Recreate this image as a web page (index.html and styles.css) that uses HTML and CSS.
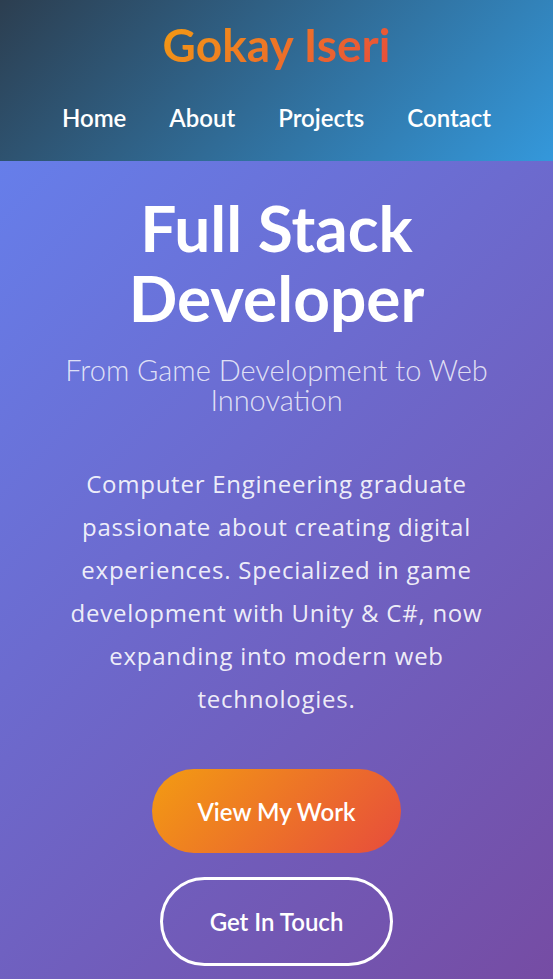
FILE: index.html
```html
<!DOCTYPE html>
<html lang="en">
<head>
<meta charset="utf-8">
<meta name="viewport" content="width=device-width, initial-scale=1">
<title>Gokay Iseri</title>
<link rel="stylesheet" href="styles.css">
</head>
<body>
<header class="site-header">
  <div class="logo">Gokay Iseri</div>
  <nav class="nav">
    <a href="#home" class="nav-link">Home</a>
    <a href="#about" class="nav-link">About</a>
    <a href="#projects" class="nav-link">Projects</a>
    <a href="#contact" class="nav-link">Contact</a>
  </nav>
</header>
<section class="hero" id="home">
  <h1 class="hero-title">Full Stack Developer</h1>
  <h2 class="hero-subtitle">From Game Development to Web Innovation</h2>
  <p class="hero-text">Computer Engineering graduate passionate about creating digital experiences. Specialized in game development with Unity &amp; C#, now expanding into modern web technologies.</p>
  <div class="hero-buttons">
    <a href="#projects" class="btn btn-primary">View My Work</a>
    <a href="#contact" class="btn btn-outline">Get In Touch</a>
  </div>
</section>
</body>
</html>
```
FILE: styles.css
```css
* { box-sizing: border-box; margin: 0; padding: 0; }

html, body {
  height: 100%;
}

body {
  font-family: "Segoe UI", Lato, "Noto Sans", sans-serif;
  color: #fff;
  background: linear-gradient(135deg, #667eea 0%, #764ba2 100%);
  overflow: hidden;
}

.site-header {
  height: 161px;
  background: linear-gradient(135deg, #2c3e50 0%, #3498db 100%);
  display: flex;
  flex-direction: column;
  align-items: center;
  padding-top: 17px;
}

.logo {
  font-size: 46px;
  font-weight: 700;
  line-height: 55px;
  background: linear-gradient(135deg, #f39c12 0%, #e74c3c 100%);
  -webkit-background-clip: text;
  background-clip: text;
  color: transparent;
}

.nav {
  display: flex;
  gap: 43px;
  margin-top: 31px;
}

.nav-link {
  color: #fff;
  text-decoration: none;
  font-size: 24px;
  font-weight: 600;
  line-height: 30px;
}

.hero {
  min-height: 818px;
  background: linear-gradient(135deg, #667eea 0%, #764ba2 100%);
  padding: 32px 32px 40px;
  display: flex;
  flex-direction: column;
  align-items: center;
  text-align: center;
}

.hero-title {
  font-size: 64px;
  font-weight: 700;
  line-height: 70px;
}

.hero-subtitle {
  font-size: 29px;
  font-weight: 300;
  line-height: 30px;
  color: rgba(255, 255, 255, 0.8);
  margin-top: 22px;
}

.hero-text {
  font-family: "Segoe UI", "Open Sans", "Noto Sans", sans-serif;
  font-size: 24px;
  letter-spacing: 0.75px;
  line-height: 43px;
  color: rgba(255, 255, 255, 0.9);
  margin-top: 47px;
}

.hero-buttons {
  display: flex;
  flex-direction: column;
  align-items: center;
  gap: 24px;
  margin-top: 49px;
}

.btn {
  display: flex;
  align-items: center;
  justify-content: center;
  height: 84px;
  padding: 0 45px;
  border-radius: 50px;
  font-size: 24px;
  font-weight: 600;
  color: #fff;
  text-decoration: none;
}

.btn-primary {
  background: linear-gradient(135deg, #f39c12 0%, #e74c3c 100%);
}

.btn-outline {
  height: 89px;
  padding: 0 47px;
  border: 3px solid #fff;
}
```
